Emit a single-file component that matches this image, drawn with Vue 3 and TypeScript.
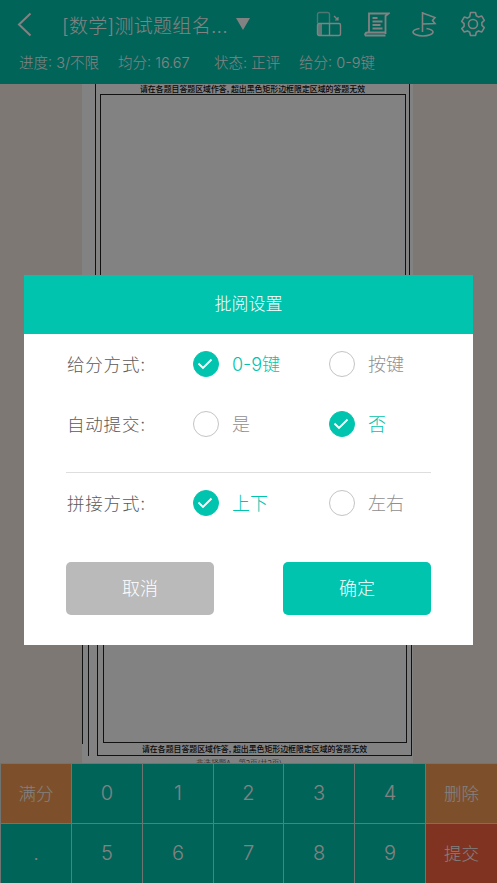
<script setup lang="ts">
interface Option { text: string; checked: boolean }
interface Row { label: string; options: Option[]; cls: string }

const stats: string[] = ['进度: 3/不限', '均分: 16.67', '状态: 正评', '给分: 0-9键']

const rows: Row[] = [
  { label: '给分方式:', cls: 'row-a', options: [{ text: '0-9键', checked: true }, { text: '按键', checked: false }] },
  { label: '自动提交:', cls: 'row-b', options: [{ text: '是', checked: false }, { text: '否', checked: true }] },
  { label: '拼接方式:', cls: 'row-c', options: [{ text: '上下', checked: true }, { text: '左右', checked: false }] }
]

const keys: { text: string; cls: string }[] = [
  { text: '满分', cls: 'orange word' }, { text: '0', cls: '' }, { text: '1', cls: '' }, { text: '2', cls: '' }, { text: '3', cls: '' }, { text: '4', cls: '' }, { text: '删除', cls: 'orange word' },
  { text: '.', cls: '' }, { text: '5', cls: '' }, { text: '6', cls: '' }, { text: '7', cls: '' }, { text: '8', cls: '' }, { text: '9', cls: '' }, { text: '提交', cls: 'red word' }
]

const notice = '请在各题目答题区域作答, 超出黑色矩形边框限定区域的答题无效'
</script>

<template>
  <div class="stage">
    <header class="top">
      <div class="bar">
        <svg class="back" width="15" height="25" viewBox="0 0 15 25"><path d="M13.5 1.5 2 12.5l11.5 11" fill="none" stroke="#fff" stroke-width="2"/></svg>
        <span class="title">[数学]测试题组名...</span>
        <span class="tri"></span>
        <div class="icons">
          <svg width="26" height="26" viewBox="0 0 26 26" fill="none" stroke="#fff" stroke-width="1.4">
            <path d="M1.5 12V3.5a2 2 0 0 1 2-2h8a2 2 0 0 1 2 2V12" opacity=".6"/>
            <rect x="1.5" y="12.5" width="23" height="12" rx="1.5"/>
            <path d="M13.5 12.5v12" />
            <rect x="2" y="13" width="4" height="11" fill="#fff" stroke="none" opacity=".75"/>
            <path d="M18 5l4 4m0-3v3h-3" stroke-width="1.2"/>
          </svg>
          <svg width="26" height="26" viewBox="0 0 26 26" fill="none" stroke="#fff" stroke-width="1.8">
            <path d="M5 21V2.500h19.500L21.500 5v18"/>
            <path d="M1 24.500h20.500M1 24.500c0-2 1-3 2.500-3H21"/>
            <path d="M8.500 7h5M8.500 10.500h10M8.500 14h8M8.500 17.500h10"/>
          </svg>
          <svg width="26" height="26" viewBox="0 0 26 26" fill="none" stroke="#fff" stroke-width="1.6">
            <path d="M10.500 21V1M10.500 2l12.500 4.500-2.500 3 2.500 3-12.500.5"/>
            <path d="M7.500 17.500C3.500 18.200 1 19.400 1 21c0 2.200 4.500 4 10 4s10-1.800 10-4c0-1.600-2.500-2.800-6.500-3.500"/>
          </svg>
          <svg width="26" height="26" viewBox="0 0 26 26" fill="none" stroke="#fff" stroke-width="1.6" stroke-linejoin="round">
            <circle cx="13" cy="13" r="4.500"/>
            <path d="M10.500 1.500h5l.8 3.300 2.300 1.300 3.200-1 2.500 4.300-2.400 2.300v2.600l2.400 2.300-2.500 4.300-3.200-1-2.300 1.300-.8 3.300h-5l-.8-3.300-2.300-1.300-3.200 1L1.700 17.600l2.400-2.300v-2.600L1.700 10.400l2.500-4.300 3.200 1 2.300-1.300z"/>
          </svg>
        </div>
      </div>
      <div class="stats">
        <span v-for="s in stats" :key="s">{{ s }}</span>
      </div>
    </header>

    <main class="viewer">
      <div class="paper">
        <section class="page-one">
          <div class="frame-one">
            <div class="notice">{{ notice }}</div>
            <div class="inner-one"></div>
          </div>
        </section>
        <section class="page-two">
          <div class="sheet">
            <div class="rail rail-short"></div>
            <div class="rail rail-long"></div>
            <div class="frame-two">
              <div class="inner-two"></div>
              <div class="notice notice-two">{{ notice }}</div>
            </div>
          </div>
          <div class="pager">非选择题A　第2页(共2页)</div>
        </section>
      </div>
    </main>

    <div class="keypad">
      <div v-for="k in keys" :key="k.text" class="key" :class="k.cls">{{ k.text }}</div>
    </div>

    <div class="overlay">
      <div class="dialog">
        <div class="dialog-title">批阅设置</div>
        <div class="dialog-body">
          <template v-for="r in rows" :key="r.label">
            <div class="row" :class="r.cls">
              <span class="row-label">{{ r.label }}</span>
              <div v-for="o in r.options" :key="o.text" class="opt" :class="{ on: o.checked }">
                <span class="radio">
                  <svg v-if="o.checked" width="26" height="26" viewBox="0 0 26 26"><path d="M6.500 13.500l4.500 4.500 8.500-8.500" fill="none" stroke="#fff" stroke-width="1.800"/></svg>
                </span>
                <span class="opt-text">{{ o.text }}</span>
              </div>
            </div>
            <div v-if="r.cls === 'row-b'" class="rule"></div>
          </template>
          <div class="actions">
            <button class="btn cancel" type="button">取消</button>
            <button class="btn ok" type="button">确定</button>
          </div>
        </div>
      </div>
    </div>
  </div>
</template>

<style scoped>
.stage {
  position: relative;
  width: 497px;
  height: 883px;
  display: flex;
  flex-direction: column;
  overflow: hidden;
  background: #f6ece2;
  font-family: Inter, "Noto Sans CJK SC", sans-serif;
  font-weight: 300;
}
.top {
  height: 84px;
  flex: none;
  background: #00c4ae;
  color: #fff;
}
.bar {
  height: 48px;
  display: flex;
  align-items: center;
  padding-left: 17px;
}
.back { flex: none; }
.title {
  margin-left: 30px;
  font-size: 19px;
  white-space: nowrap;
  letter-spacing: 0.300px;
}
.tri {
  width: 0;
  height: 0;
  margin-left: 8px;
  margin-top: -1px;
  border-left: 7px solid transparent;
  border-right: 7px solid transparent;
  border-top: 12px solid #fff;
}
.icons {
  margin-left: auto;
  margin-right: 11px;
  display: flex;
  gap: 22px;
}
.stats {
  display: flex;
  padding-left: 19px;
  font-size: 14.500px;
  line-height: 30px;
}
.stats span:nth-child(1) { width: 99px; }
.stats span:nth-child(2) { width: 96px; }
.stats span:nth-child(3) { width: 85px; }
.viewer {
  flex: 1;
  min-height: 0;
  overflow: hidden;
}
.paper {
  width: 331px;
  height: 679px;
  margin-left: 82px;
  background: #fff;
  color: #111;
  display: flex;
  flex-direction: column;
  overflow: hidden;
}
.page-one {
  height: 320px;
  flex: none;
  padding-left: 13px;
}
.frame-one {
  width: 315px;
  height: 100%;
  box-sizing: border-box;
  border-left: 1.500px solid #222;
  border-right: 1.500px solid #222;
  display: flex;
  flex-direction: column;
}
.notice {
  font-family: "Noto Sans CJK SC", sans-serif;
  font-weight: 500;
  font-size: 7.900px;
  line-height: 10px;
  height: 10px;
  text-align: center;
  white-space: nowrap;
}
.inner-one {
  flex: 1;
  margin: 0 3.500px;
  border: 1.500px solid #222;
  border-bottom: 0;
}
.page-two {
  flex: 1;
  min-height: 0;
  display: flex;
  flex-direction: column;
}
.sheet {
  flex: 1;
  min-height: 0;
  display: flex;
}
.rail {
  border-left: 1.500px solid #222;
  box-sizing: border-box;
}
.rail-short { width: 6px; height: 340px; }
.rail-long { width: 9px; }
.frame-two {
  width: 315px;
  box-sizing: border-box;
  border: 1.500px solid #222;
  border-top: 0;
  display: flex;
  flex-direction: column;
}
.inner-two {
  flex: 1;
  margin: 0 4.500px;
  border: 1.500px solid #222;
  border-top: 0;
}
.notice-two {
  height: 12px;
  line-height: 12px;
}
.pager {
  height: 7px;
  flex: none;
  overflow: hidden;
  padding-top: 2px;
  box-sizing: border-box;
  padding-left: 114px;
  font-family: "Noto Sans CJK SC", sans-serif;
  font-size: 7.600px;
  line-height: 10px;
  white-space: nowrap;
}
.keypad {
  height: 120px;
  flex: none;
  display: grid;
  grid-template-columns: 71px 71px 71px 70px 71px 71px 72px;
  grid-template-rows: 60px 60px;
  color: #fff;
}
.key {
  box-sizing: border-box;
  background: #00c4ae;
  border-left: 1px solid #d8e4e0;
  border-top: 1px solid #d8e4e0;
  display: flex;
  align-items: center;
  justify-content: center;
  font-size: 20px;
  padding-bottom: 2px;
}
.word { font-size: 17.500px; }
.orange { background: #f69d55; }
.red { background: #fb6440; }
.overlay {
  position: absolute;
  inset: 0;
  background: rgba(0, 0, 0, 0.49);
  padding: 275px 24px 0;
  box-sizing: border-box;
}
.dialog {
  width: 449px;
  height: 370px;
  background: #fff;
  display: flex;
  flex-direction: column;
}
.dialog-title {
  height: 59px;
  flex: none;
  background: #00c4ae;
  color: #fff;
  font-size: 17px;
  line-height: 59px;
  text-align: center;
}
.dialog-body {
  flex: 1;
  padding: 0 42px;
}
.row {
  height: 60px;
  display: flex;
  align-items: center;
}
.row-label {
  width: 126px;
  flex: none;
  margin-left: 1px;
  font-size: 17.500px;
  letter-spacing: 0.800px;
  color: #5a5a5a;
  padding-bottom: 2px;
}
.opt {
  width: 136px;
  flex: none;
  display: flex;
  align-items: center;
  font-size: 18px;
  color: #8f8f8f;
}
.opt:last-child { width: 102px; }
.radio {
  width: 26px;
  height: 26px;
  flex: none;
  box-sizing: border-box;
  border-radius: 50%;
  border: 1.800px solid #c4c4c4;
  margin-right: 13px;
  position: relative;
}
.radio svg {
  position: absolute;
  left: -1.800px;
  top: -1.800px;
}
.opt-text { padding-bottom: 2px; }
.on { color: #00c4ae; }
.on .radio {
  background: #00c4ae;
  border-color: #00c4ae;
}
.rule {
  height: 1px;
  margin: 18px 0 0;
  background: #dedede;
}
.actions {
  display: flex;
  justify-content: space-between;
  margin-top: 29px;
}
.btn {
  width: 148px;
  height: 53px;
  border: 0;
  border-radius: 5px;
  color: #fff;
  font-family: inherit;
  font-size: 18px;
  font-weight: 300;
  padding: 0 0 3px;
}
.cancel { background: #bababa; }
.ok { background: #00c4ae; }
</style>
